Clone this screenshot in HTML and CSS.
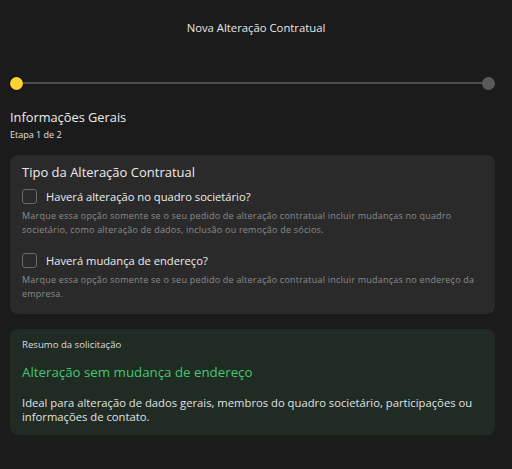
FILE: index.html
```html
<html>
    <head>
        <title>Nova Alteração Contratual</title>
        <link rel="stylesheet" href="styles.css">
    </head>
    <body>
        <div class="page">
            <header class="top-bar">Nova Alteração Contratual</header>

            <div class="stepper">
                <span class="step-dot active"></span>
                <span class="step-line"></span>
                <span class="step-dot"></span>
            </div>

            <div class="step-heading">
                <h2>Informações Gerais</h2>
                <p>Etapa 1 de 2</p>
            </div>

            <section class="card">
                <h3>Tipo da Alteração Contratual</h3>

                <div class="option">
                    <label class="option-label">
                        <input type="checkbox" />
                        <span class="box"></span>
                        Haverá alteração no quadro societário?
                    </label>
                    <p class="option-help">Marque essa opção somente se o seu pedido de alteração contratual incluir mudanças no quadro societário, como alteração de dados, inclusão ou remoção de sócios.</p>
                </div>

                <div class="option">
                    <label class="option-label">
                        <input type="checkbox" />
                        <span class="box"></span>
                        Haverá mudança de endereço?
                    </label>
                    <p class="option-help">Marque essa opção somente se o seu pedido de alteração contratual incluir mudanças no endereço da empresa.</p>
                </div>
            </section>

            <section class="summary">
                <p class="summary-label">Resumo da solicitação</p>
                <h3>Alteração sem mudança de endereço</h3>
                <p class="summary-text">Ideal para alteração de dados gerais, membros do quadro societário, participações ou informações de contato.</p>
            </section>
        </div>
    </body>
</html>
```

FILE: styles.css
```css
body {
    font-family: "Open Sans", "DejaVu Sans", sans-serif;
    background-color: #1b1b1b;
    color: #e6e6e6;
    margin: 0;
    padding: 0;
}

.page {
    padding: 0 17px 0 10px;
}

.top-bar {
    height: 56px;
    line-height: 56px;
    text-align: center;
    font-size: 11.3px;
    color: #e8e8e8;
    margin-left: 7px;
}

.stepper {
    display: flex;
    align-items: center;
    height: 14px;
    margin-top: 20px;
}

.step-dot {
    width: 13px;
    height: 13px;
    border-radius: 50%;
    background-color: #5a5a5a;
    flex-shrink: 0;
}

.step-dot.active {
    background-color: #fdd235;
    box-shadow: 0 0 0 1px #111;
}

.step-line {
    flex: 1;
    height: 2px;
    background-color: #4e4e4e;
}

.step-heading {
    margin-top: 18px;
}

.step-heading h2 {
    margin: 0;
    font-size: 12.8px;
    font-weight: normal;
    color: #ececec;
    line-height: 18px;
}

.step-heading p {
    margin: 2px 0 0;
    font-size: 9px;
    color: #e0e0e0;
}

.card {
    background-color: #2a2a2a;
    border-radius: 8px;
    margin-top: 14px;
    padding: 8px 12px 13px;
}

.card h3 {
    margin: 0;
    font-size: 13px;
    font-weight: normal;
    color: #ececec;
    line-height: 18px;
}

.option {
    margin-top: 8px;
}

.option + .option {
    margin-top: 16px;
}

.option-label {
    display: flex;
    align-items: center;
    gap: 9px;
    font-size: 11.2px;
    color: #eeeeee;
    cursor: pointer;
}

.option-label input {
    display: none;
}

.box {
    width: 13px;
    height: 13px;
    border: 1.5px solid #6a6a6a;
    border-radius: 3px;
}

.option-help {
    margin: 5px 0 0;
    font-size: 9px;
    letter-spacing: 0.22px;
    line-height: 14px;
    color: #8a8a8a;
}

.summary {
    background-color: #1f2b23;
    border-radius: 8px;
    margin-top: 15px;
    padding: 9px 12px 11px;
}

.summary-label {
    margin: 0;
    font-size: 9.6px;
    color: #dddddd;
}

.summary h3 {
    margin: 12px 0 0;
    font-size: 13.3px;
    font-weight: normal;
    color: #43c86f;
}

.summary-text {
    margin: 15px 0 0;
    font-size: 11.25px;
    line-height: 14px;
    color: #e2e2e2;
}
```
